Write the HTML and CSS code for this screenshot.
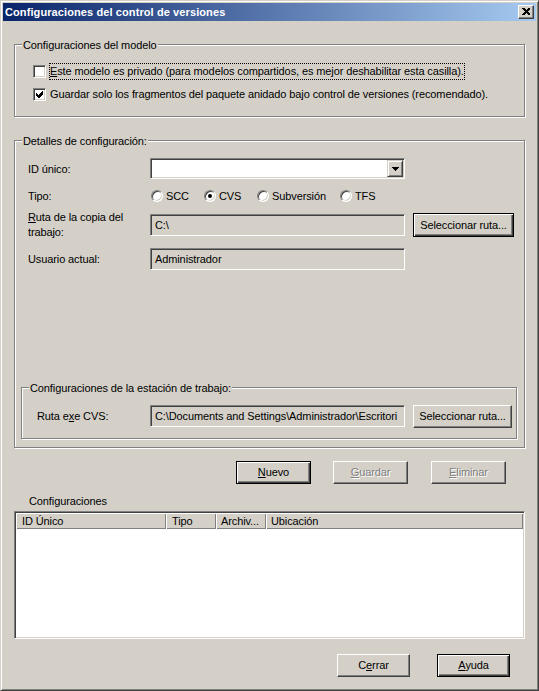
FILE: index.html
```html
<!DOCTYPE html>
<html lang="es">
<head>
<meta charset="utf-8">
<title>Configuraciones del control de versiones</title>
<link rel="stylesheet" href="styles.css">
</head>
<body>
<div class="window">
  <div class="titlebar">
    <span class="title">Configuraciones del control de versiones</span>
    <span class="close">
      <svg width="8" height="7" viewBox="0 0 8 7" shape-rendering="crispEdges"><path d="M0 0h2l2 2l2-2h2v1l-2.5 2.5L8 6v1H6L4 5L2 7H0V6l2.5-2.5L0 1z" fill="#000"/></svg>
    </span>
  </div>
  <div class="client">
    <div class="group g-model">
      <span class="legend">Configuraciones del modelo</span>
      <div class="check-row">
        <span class="checkbox"></span>
        <span class="check-text focus"><u>E</u>ste modelo es privado (para modelos compartidos, es mejor deshabilitar esta casilla).</span>
      </div>
      <div class="check-row">
        <span class="checkbox">
          <svg width="11" height="11" viewBox="1 1 11 11" shape-rendering="crispEdges"><polygon points="3,5 5,7 9,3 10,3 10,6 6,10 5,10 3,8" fill="#000"/></svg>
        </span>
        <span class="check-text plain">Guardar solo los fragmentos del paquete anidado bajo control de versiones (recomendado).</span>
      </div>
    </div>

    <div class="group g-details">
      <span class="legend">Detalles de configuración:</span>
      <div class="field-row row-id">
        <span class="label">ID único:</span>
        <div class="combo">
          <span class="combo-btn">
            <svg width="7" height="4" viewBox="0 0 7 4" shape-rendering="crispEdges"><polygon points="0,0 7,0 3.5,4" fill="#000"/></svg>
          </span>
        </div>
      </div>
      <div class="field-row row-tipo">
        <span class="label">Tipo:</span>
        <div class="radios">
          <span class="radio-item w-scc"><span class="radio"></span>SCC</span>
          <span class="radio-item w-cvs"><span class="radio on"></span>CVS</span>
          <span class="radio-item w-svn"><span class="radio"></span>Subversión</span>
          <span class="radio-item"><span class="radio"></span>TFS</span>
        </div>
      </div>
      <div class="field-row row-ruta">
        <span class="label two-line"><u>R</u>uta de la copia del<br>trabajo:</span>
        <div class="textbox">C:\</div>
        <span class="btn btn-default btn-sel1">Seleccionar ruta...</span>
      </div>
      <div class="field-row row-user">
        <span class="label">Usuario actual:</span>
        <div class="textbox">Administrador</div>
      </div>

      <div class="group g-sub">
        <span class="legend">Configuraciones de la estación de trabajo:</span>
        <div class="field-row row-exe">
          <span class="label label-exe">Ruta e<u>x</u>e CVS:</span>
          <div class="textbox">C:\Documents and Settings\Administrador\Escritori</div>
          <span class="btn btn-sel2">Seleccionar ruta...</span>
        </div>
      </div>
    </div>

    <div class="actions">
      <span class="btn btn-default btn-std"><u>N</u>uevo</span>
      <span class="btn btn-disabled btn-std btn-guardar"><u>G</u>uardar</span>
      <span class="btn btn-disabled btn-std btn-eliminar"><u>E</u>liminar</span>
    </div>

    <div class="list-label">Configuraciones</div>
    <div class="listview">
      <div class="lv-header">
        <span class="lv-col col-id">ID Único</span>
        <span class="lv-col col-tipo">Tipo</span>
        <span class="lv-col col-arch">Archiv...</span>
        <span class="lv-col col-ubic">Ubicación</span>
      </div>
    </div>

    <div class="footer">
      <span class="btn btn-foot">C<u>e</u>rrar</span>
      <span class="btn btn-default btn-foot btn-ayuda"><u>A</u>yuda</span>
    </div>
  </div>
</div>
</body>
</html>
```

FILE: styles.css
```css
* { box-sizing: border-box; }

body {
  margin: 0;
  background: #D4D0C8;
  font-family: "Liberation Sans", Arial, sans-serif;
  font-size: 11px;
  letter-spacing: -0.11px;
  color: #000;
}

.window {
  width: 539px;
  height: 691px;
  border: 1px solid;
  border-color: #D4D0C8 #404040 #404040 #D4D0C8;
  box-shadow: inset 1px 1px 0 #fff, inset -1px -1px 0 #808080;
  padding: 2px;
  background: #D4D0C8;
  display: flex;
  flex-direction: column;
}

.titlebar {
  height: 18px;
  flex: none;
  background: linear-gradient(to right, #0A246A, #A6CAF0);
  display: flex;
  align-items: center;
  justify-content: space-between;
  padding: 0 2px;
  color: #fff;
  font-weight: bold;
  font-size: 11px;
  letter-spacing: 0.1px;
}

.close {
  width: 16px;
  height: 14px;
  background: #D4D0C8;
  border: 1px solid;
  border-color: #fff #404040 #404040 #fff;
  box-shadow: inset -1px -1px 0 #808080;
  display: grid;
  place-items: center;
  padding-bottom: 1px;
}
.close svg { display: block; }

.client {
  flex: 1;
  padding-left: 11px;
  display: flex;
  flex-direction: column;
}

/* etched group boxes */
.group {
  position: relative;
  border: 1px solid #808080;
  box-shadow: 1px 1px 0 #fff, inset 1px 1px 0 #fff;
  flex: none;
}
.legend {
  position: absolute;
  top: -7px;
  left: 7px;
  padding: 0 1px;
  background: #D4D0C8;
  line-height: 14px;
  white-space: nowrap;
}

.g-model {
  margin-top: 23px;
  width: 511px;
  height: 73px;
  padding: 18px 0 0 18px;
  display: flex;
  flex-direction: column;
  gap: 6px;
}

.check-row {
  display: flex;
  align-items: center;
  height: 17px;
}

.checkbox {
  width: 13px;
  height: 13px;
  flex: none;
  border: 1px solid;
  border-color: #808080 #fff #fff #808080;
  box-shadow: inset 1px 1px 0 #404040, inset -1px -1px 0 #D4D0C8;
  background: #fff;
}
.checkbox svg { display: block; }

.check-text {
  white-space: nowrap;
  line-height: 15px;
}
.check-text.focus {
  margin-left: 3px;
  border: 1px dotted #000;
}
.check-text.plain {
  margin-left: 4px;
}

.g-details {
  margin-top: 23px;
  width: 511px;
  height: 308px;
  padding-top: 16px;
}

.field-row {
  display: flex;
  align-items: center;
  margin-left: 13px;
}
.label {
  width: 122px;
  flex: none;
  white-space: nowrap;
}
.two-line { line-height: 15px; }

.row-id { height: 21px; margin-top: 1px; }
.row-tipo { height: 21px; margin-top: 6px; }
.row-ruta { height: 30px; margin-top: 4px; }
.row-user { height: 22px; margin-top: 8px; }

.combo {
  width: 255px;
  height: 21px;
  border: 1px solid;
  border-color: #808080 #fff #fff #808080;
  box-shadow: inset 1px 1px 0 #404040, inset -1px -1px 0 #D4D0C8;
  background: #fff;
  padding: 1px;
  display: flex;
  justify-content: flex-end;
}
.combo-btn {
  width: 16px;
  height: 17px;
  background: #D4D0C8;
  border: 1px solid;
  border-color: #D4D0C8 #404040 #404040 #D4D0C8;
  box-shadow: inset 1px 1px 0 #fff, inset -1px -1px 0 #808080;
  display: grid;
  place-items: center;
}
.combo-btn svg { display: block; }

.radios {
  display: flex;
  align-items: center;
  margin-left: 1px;
}
.radio-item {
  display: flex;
  align-items: center;
  gap: 3px;
  white-space: nowrap;
}
.w-scc { width: 53px; }
.w-cvs { width: 53px; }
.w-svn { width: 83px; }
.radio {
  width: 12px;
  height: 12px;
  flex: none;
  border-radius: 50%;
  border: 1px solid;
  border-color: #808080 #fff #fff #808080;
  box-shadow: inset 1px 1px 0 #404040, inset -1px -1px 0 #D4D0C8;
  background: #fff;
  display: grid;
  place-items: center;
}
.radio.on::after {
  content: "";
  width: 4px;
  height: 4px;
  border-radius: 50%;
  background: #000;
}

.textbox {
  width: 255px;
  height: 22px;
  flex: none;
  border: 1px solid;
  border-color: #808080 #fff #fff #808080;
  box-shadow: inset 1px 1px 0 #404040, inset -1px -1px 0 #D4D0C8;
  background: #D4D0C8;
  padding: 0 2px 0 4px;
  line-height: 20px;
  white-space: nowrap;
  overflow: hidden;
}

.btn {
  display: flex;
  align-items: center;
  justify-content: center;
  flex: none;
  background: #D4D0C8;
  border: 1px solid;
  border-color: #fff #404040 #404040 #fff;
  box-shadow: inset -1px -1px 0 #808080;
  white-space: nowrap;
  padding-bottom: 1px;
}
.btn-default {
  border: 1px solid #000;
  box-shadow: inset 1px 1px 0 #fff, inset -1px -1px 0 #404040, inset -2px -2px 0 #808080;
}
.btn-disabled {
  color: #808080;
  text-shadow: 1px 1px 0 #fff;
}

.btn-sel1 { margin-left: 8px; width: 101px; height: 24px; }
.btn-sel2 { margin-left: 8px; width: 99px; height: 23px; }

.g-sub {
  margin: 117px 0 0 6px;
  width: 496px;
  height: 52px;
  padding-top: 17px;
}
.row-exe {
  margin-left: 15px;
  align-items: flex-start;
  height: 23px;
}
.label-exe {
  width: 113px;
  line-height: 22px;
}

.actions {
  display: flex;
  margin-top: 13px;
  padding-left: 222px;
}
.btn-std { width: 75px; height: 23px; }
.btn-guardar { margin-left: 22px; }
.btn-eliminar { margin-left: 23px; }

.list-label {
  margin-top: 10px;
  padding-left: 15px;
  line-height: 14px;
}

.listview {
  margin-top: 3px;
  width: 511px;
  height: 128px;
  flex: none;
  border: 1px solid;
  border-color: #808080 #fff #fff #808080;
  box-shadow: inset 1px 1px 0 #404040, inset -1px -1px 0 #D4D0C8;
  background: #fff;
  padding: 1px;
}
.lv-header {
  display: flex;
  height: 16px;
}
.lv-col {
  background: #D4D0C8;
  box-shadow: inset 1px 1px 0 #fff, inset -1px -1px 0 #808080;
  line-height: 16px;
  padding-left: 6px;
  white-space: nowrap;
  overflow: hidden;
}
.col-id { width: 150px; }
.col-tipo { width: 50px; }
.col-arch { width: 50px; padding-left: 5px; }
.col-ubic { flex: 1; padding-left: 5px; }

.footer {
  display: flex;
  margin-top: 15px;
  padding-left: 323px;
}
.btn-foot { width: 73px; height: 23px; }
.btn-ayuda { margin-left: 27px; }
```
